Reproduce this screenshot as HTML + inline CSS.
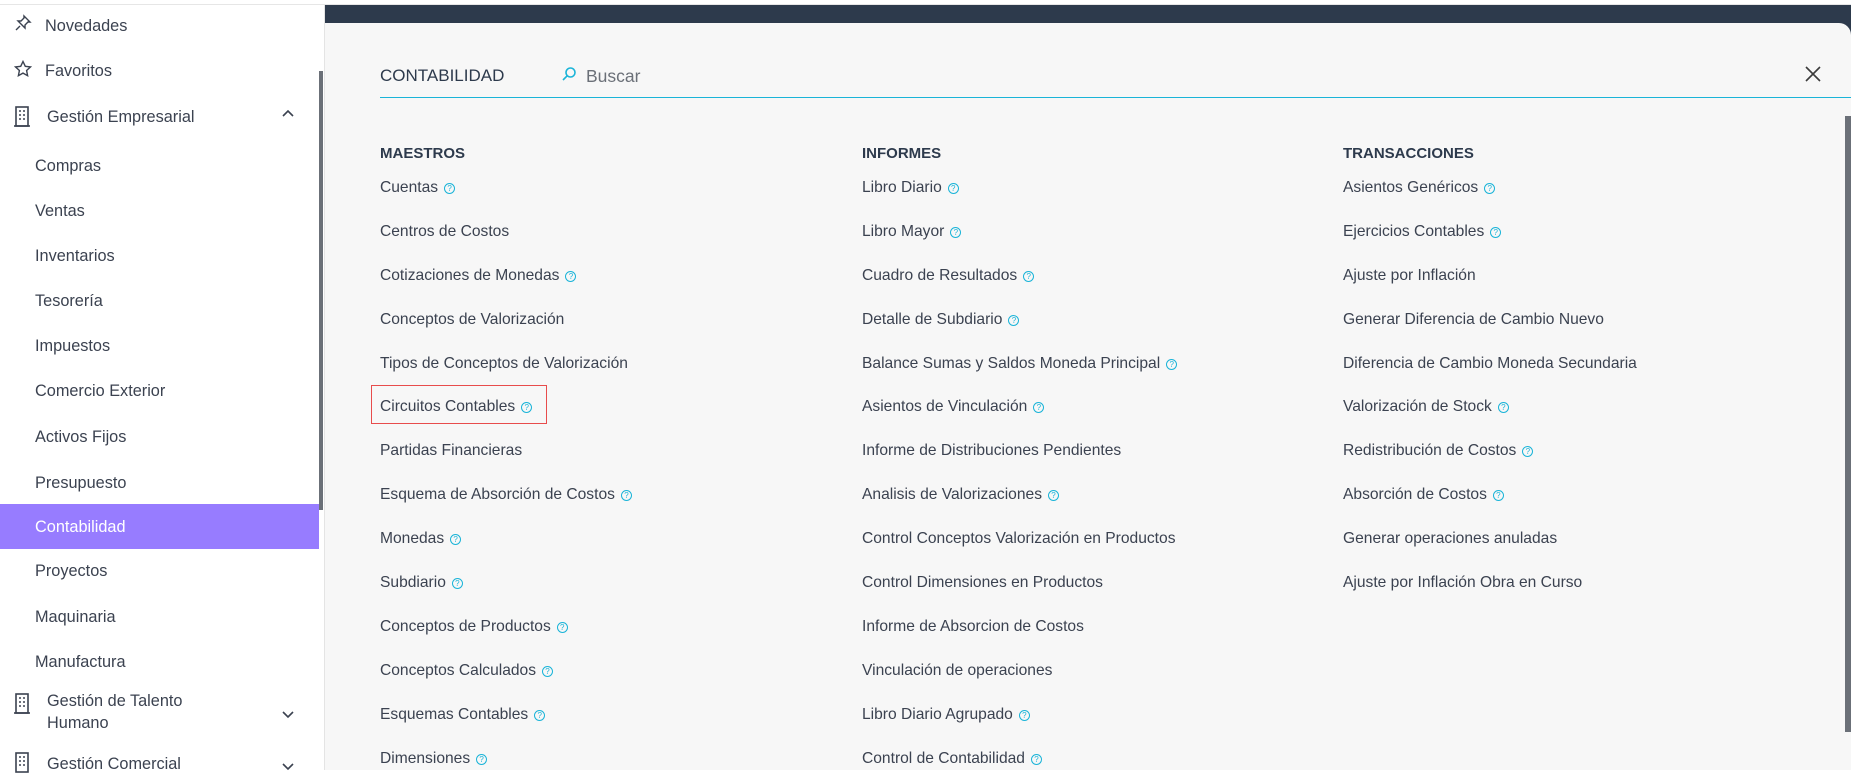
<!DOCTYPE html>
<html><head><meta charset="utf-8"><style>
*{margin:0;padding:0;box-sizing:border-box}
body{width:1851px;height:770px;overflow:hidden;background:#fff;font-family:"Liberation Sans",sans-serif;position:relative;color:#3b4250}
.top{position:absolute;left:0;top:0;width:1851px;height:5px;background:#fff;border-bottom:1px solid #e6e6e6}
.bar{position:absolute;left:325px;top:5px;width:1526px;height:30px;background:#2d3a4c}
.panel{position:absolute;left:325px;top:23px;width:1526px;height:747px;background:#f7f7f7;border-top-right-radius:12px}
.side{position:absolute;left:0;top:5px;width:325px;height:765px;background:#fff;border-right:1px solid #e4e4e4}
.sb{position:absolute;left:319px;top:71px;width:4px;height:439px;background:#6b7078}
.si{position:absolute;font-size:16.3px;color:#3b4250;line-height:20px;white-space:nowrap}
.hl{position:absolute;left:0;top:504px;width:319px;height:45px;background:#977cff}
.ic{position:absolute;left:14px}
.chev{position:absolute;left:281px}
.t{position:absolute;font-size:15.6px;line-height:20px;white-space:nowrap;color:#3b4250}
.h{font-weight:bold;color:#2d3a4c;font-size:15px}
.q{display:inline-block;width:11px;height:11px;border:1px solid #1ab4d8;border-radius:50%;color:#1ab4d8;font-size:8px;line-height:9px;text-align:center;margin-left:6px;vertical-align:1px}
</style></head><body>
<div class="top"></div>
<div class="bar"></div>
<div class="panel"></div>
<div class="side"></div>
<div class="sb"></div>
<div class="hl"></div>

<svg class="ic" style="top:14px" width="18" height="18" viewBox="0 0 18 18" fill="none" stroke="#3b4250" stroke-width="1.4"><path d="M10 2l6 6-2 0-3 3 0 3-7-7 3 0 3-3z M6 12l-4 4"/></svg>
<div class="si" style="left:45px;top:16px">Novedades</div>
<svg class="ic" style="top:60px" width="18" height="18" viewBox="0 0 18 18" fill="none" stroke="#3b4250" stroke-width="1.4"><path d="M9 1.5l2.3 4.8 5.2.6-3.9 3.6 1 5.2L9 13.1l-4.6 2.6 1-5.2L1.5 6.9l5.2-.6z"/></svg>
<div class="si" style="left:45px;top:61px">Favoritos</div>
<svg class="ic" style="top:106px" width="16" height="21" viewBox="0 0 16 21" fill="none" stroke="#3b4250" stroke-width="1.6"><rect x="2" y="1" width="12" height="19"/><path d="M0 20h16" /><path d="M5 5h2M9 5h2M5 9h2M9 9h2M5 13h2M9 13h2" stroke-width="1.6"/></svg>
<div class="si" style="left:47px;top:107px">Gestión Empresarial</div>
<svg class="chev" style="top:108px" width="14" height="10" viewBox="0 0 14 10" fill="none" stroke="#3b4250" stroke-width="1.6"><path d="M2 8l5-5 5 5"/></svg>

<div class="si" style="left:35px;top:156px">Compras</div>
<div class="si" style="left:35px;top:201px">Ventas</div>
<div class="si" style="left:35px;top:246px">Inventarios</div>
<div class="si" style="left:35px;top:291px">Tesorería</div>
<div class="si" style="left:35px;top:336px">Impuestos</div>
<div class="si" style="left:35px;top:381px">Comercio Exterior</div>
<div class="si" style="left:35px;top:427px">Activos Fijos</div>
<div class="si" style="left:35px;top:473px">Presupuesto</div>
<div class="si" style="left:35px;top:517px;color:#fff">Contabilidad</div>
<div class="si" style="left:35px;top:561px">Proyectos</div>
<div class="si" style="left:35px;top:607px">Maquinaria</div>
<div class="si" style="left:35px;top:652px">Manufactura</div>
<svg class="ic" style="top:693px" width="16" height="21" viewBox="0 0 16 21" fill="none" stroke="#3b4250" stroke-width="1.6"><rect x="2" y="1" width="12" height="19"/><path d="M0 20h16"/><path d="M5 5h2M9 5h2M5 9h2M9 9h2M5 13h2M9 13h2"/></svg>
<div class="si" style="left:47px;top:690px;line-height:22px">Gestión de Talento<br>Humano</div>
<svg class="chev" style="top:710px" width="14" height="10" viewBox="0 0 14 10" fill="none" stroke="#3b4250" stroke-width="1.6"><path d="M2 2l5 5 5-5"/></svg>
<svg class="ic" style="top:752px" width="16" height="21" viewBox="0 0 16 21" fill="none" stroke="#3b4250" stroke-width="1.6"><rect x="2" y="1" width="12" height="19"/><path d="M5 5h2M9 5h2M5 9h2M9 9h2M5 13h2M9 13h2"/></svg>
<div class="si" style="left:47px;top:754px">Gestión Comercial</div>
<svg class="chev" style="top:762px" width="14" height="10" viewBox="0 0 14 10" fill="none" stroke="#3b4250" stroke-width="1.6"><path d="M2 2l5 5 5-5"/></svg>

<div class="t" style="left:380px;top:66px;font-size:17px;color:#2d3a4c">CONTABILIDAD</div>
<svg style="position:absolute;left:561px;top:66px" width="16" height="16" viewBox="0 0 16 16" fill="none" stroke="#1ab4d8" stroke-width="1.6"><circle cx="9.5" cy="6.5" r="4.5"/><path d="M6.3 9.7L2 14"/></svg>
<div class="t" style="left:586px;top:66px;font-size:17.5px;color:#6b7078">Buscar</div>
<div style="position:absolute;left:380px;top:97px;width:1471px;height:1px;background:#1ab4d8"></div>
<svg style="position:absolute;left:1804px;top:65px" width="18" height="18" viewBox="0 0 18 18" stroke="#3b3b3b" stroke-width="1.6"><path d="M2 2l14 14M16 2L2 16"/></svg>
<div style="position:absolute;left:1845px;top:116px;width:6px;height:616px;background:#6b7078"></div>

<div style="position:absolute;left:371px;top:385px;width:176px;height:39px;border:1px solid #e84c4c"></div>

<div class="t h" style="left:380px;top:144px">MAESTROS</div>
<div class="t h" style="left:862px;top:144px">INFORMES</div>
<div class="t h" style="left:1343px;top:144px">TRANSACCIONES</div>

<div class="t" style="left:380px;top:178px">Cuentas<span class="q">?</span></div>
<div class="t" style="left:380px;top:222px">Centros de Costos</div>
<div class="t" style="left:380px;top:266px">Cotizaciones de Monedas<span class="q">?</span></div>
<div class="t" style="left:380px;top:310px">Conceptos de Valorización</div>
<div class="t" style="left:380px;top:354px">Tipos de Conceptos de Valorización</div>
<div class="t" style="left:380px;top:397px">Circuitos Contables<span class="q">?</span></div>
<div class="t" style="left:380px;top:441px">Partidas Financieras</div>
<div class="t" style="left:380px;top:485px">Esquema de Absorción de Costos<span class="q">?</span></div>
<div class="t" style="left:380px;top:529px">Monedas<span class="q">?</span></div>
<div class="t" style="left:380px;top:573px">Subdiario<span class="q">?</span></div>
<div class="t" style="left:380px;top:617px">Conceptos de Productos<span class="q">?</span></div>
<div class="t" style="left:380px;top:661px">Conceptos Calculados<span class="q">?</span></div>
<div class="t" style="left:380px;top:705px">Esquemas Contables<span class="q">?</span></div>
<div class="t" style="left:380px;top:749px">Dimensiones<span class="q">?</span></div>

<div class="t" style="left:862px;top:178px">Libro Diario<span class="q">?</span></div>
<div class="t" style="left:862px;top:222px">Libro Mayor<span class="q">?</span></div>
<div class="t" style="left:862px;top:266px">Cuadro de Resultados<span class="q">?</span></div>
<div class="t" style="left:862px;top:310px">Detalle de Subdiario<span class="q">?</span></div>
<div class="t" style="left:862px;top:354px">Balance Sumas y Saldos Moneda Principal<span class="q">?</span></div>
<div class="t" style="left:862px;top:397px">Asientos de Vinculación<span class="q">?</span></div>
<div class="t" style="left:862px;top:441px">Informe de Distribuciones Pendientes</div>
<div class="t" style="left:862px;top:485px">Analisis de Valorizaciones<span class="q">?</span></div>
<div class="t" style="left:862px;top:529px">Control Conceptos Valorización en Productos</div>
<div class="t" style="left:862px;top:573px">Control Dimensiones en Productos</div>
<div class="t" style="left:862px;top:617px">Informe de Absorcion de Costos</div>
<div class="t" style="left:862px;top:661px">Vinculación de operaciones</div>
<div class="t" style="left:862px;top:705px">Libro Diario Agrupado<span class="q">?</span></div>
<div class="t" style="left:862px;top:749px">Control de Contabilidad<span class="q">?</span></div>

<div class="t" style="left:1343px;top:178px">Asientos Genéricos<span class="q">?</span></div>
<div class="t" style="left:1343px;top:222px">Ejercicios Contables<span class="q">?</span></div>
<div class="t" style="left:1343px;top:266px">Ajuste por Inflación</div>
<div class="t" style="left:1343px;top:310px">Generar Diferencia de Cambio Nuevo</div>
<div class="t" style="left:1343px;top:354px">Diferencia de Cambio Moneda Secundaria</div>
<div class="t" style="left:1343px;top:397px">Valorización de Stock<span class="q">?</span></div>
<div class="t" style="left:1343px;top:441px">Redistribución de Costos<span class="q">?</span></div>
<div class="t" style="left:1343px;top:485px">Absorción de Costos<span class="q">?</span></div>
<div class="t" style="left:1343px;top:529px">Generar operaciones anuladas</div>
<div class="t" style="left:1343px;top:573px">Ajuste por Inflación Obra en Curso</div>
</body></html>
